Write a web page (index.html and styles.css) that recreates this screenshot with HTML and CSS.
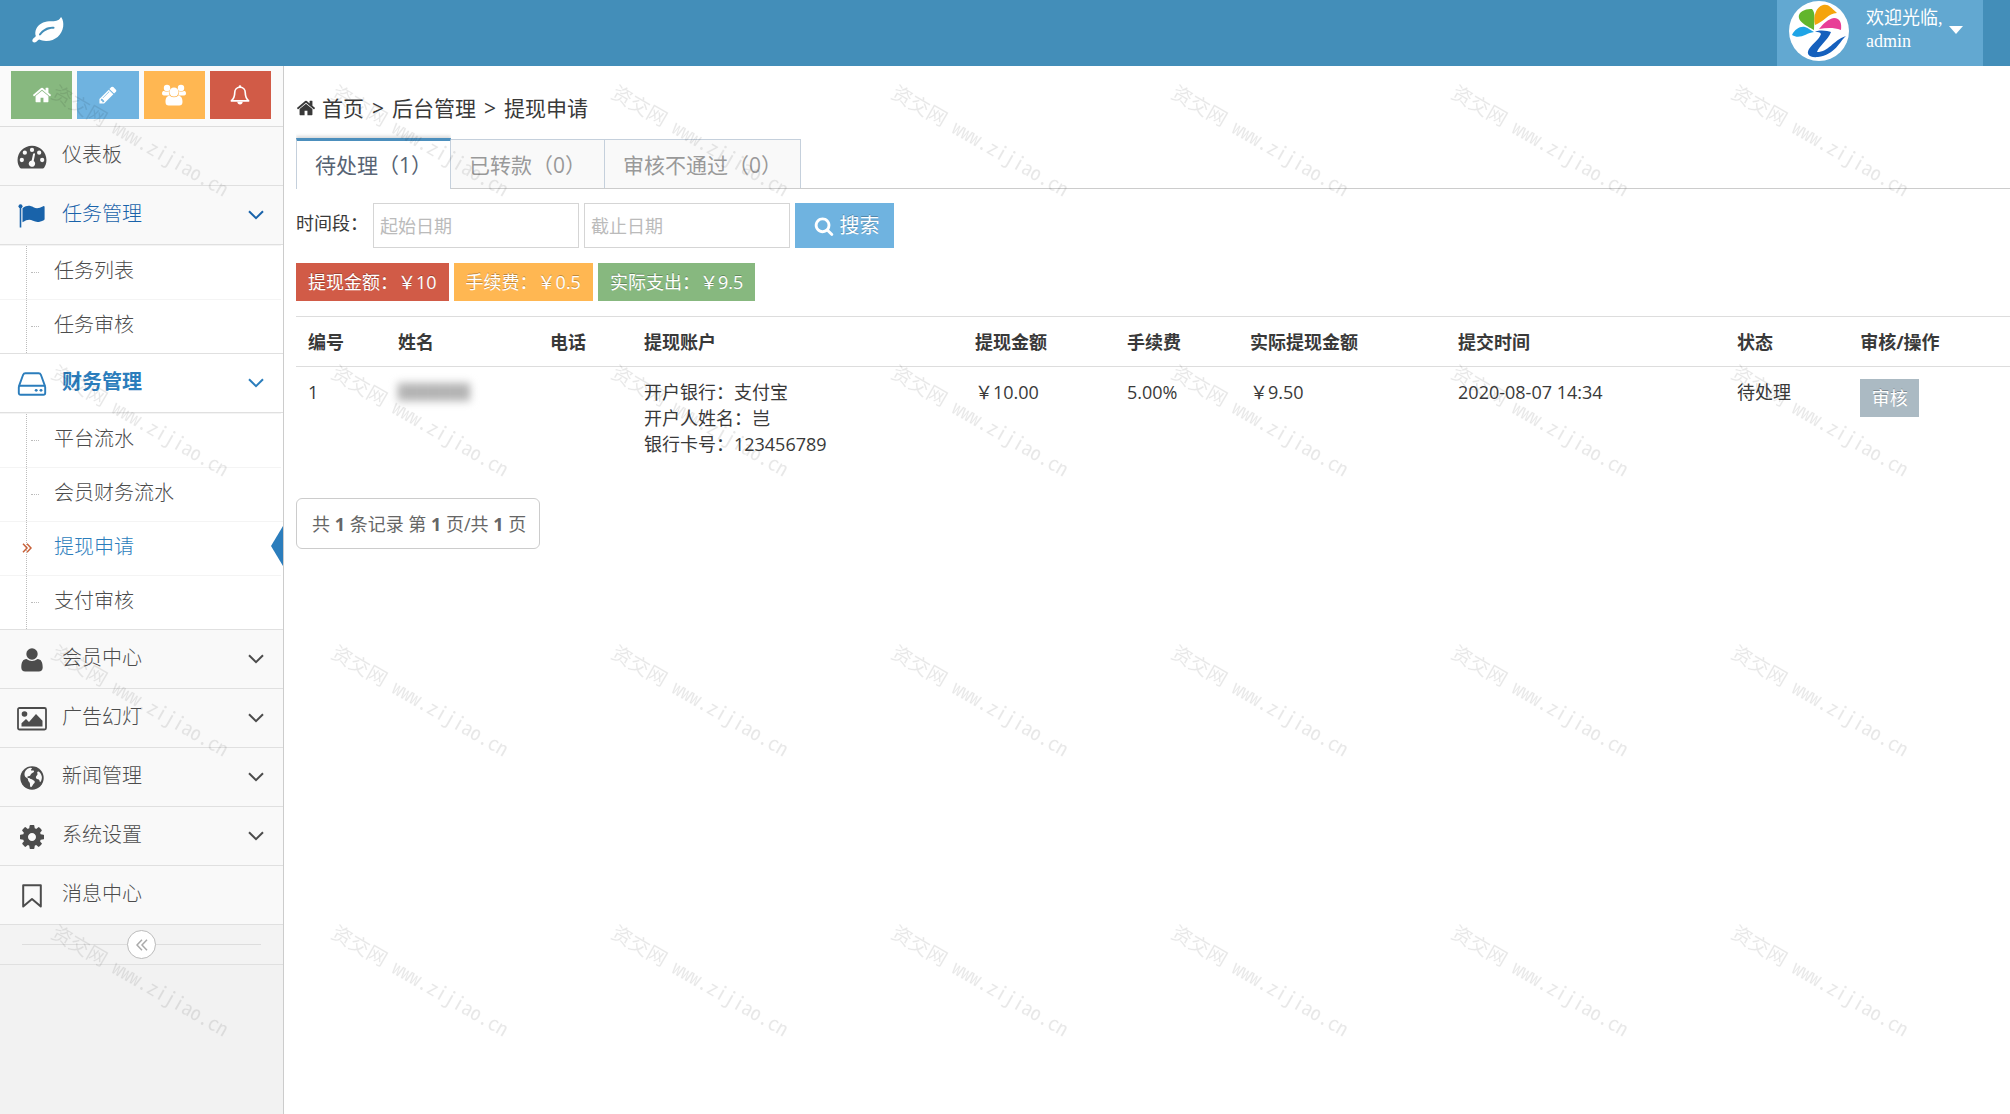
FILE: index.html
```html
<!DOCTYPE html>
<html lang="zh-CN">
<head>
<meta charset="utf-8">
<meta name="viewport" content="width=device-width, initial-scale=1">
<title>提现申请</title>
<link rel="stylesheet" href="styles.css">
</head>
<body>
<svg class="sprite" aria-hidden="true">
  <symbol id="i-home" viewBox="0 0 1792 1792"><path d="M1472 992v480q0 26-19 45t-45 19h-384v-384h-256v384h-384q-26 0-45-19t-19-45v-480q0-1 .5-3t.5-3l575-474 575 474q1 2 1 6zm223-69l-62 74q-8 9-21 11h-3q-13 0-21-7l-692-577-692 577q-12 8-24 7-13-2-21-11l-62-74q-8-10-7-23.5t11-21.5l719-599q32-26 76-26t76 26l244 204v-195q0-14 9-23t23-9h192q14 0 23 9t9 23v408l219 182q10 8 11 21.5t-7 23.5z"/></symbol>
  <symbol id="i-pencil" viewBox="0 0 1792 1792"><path d="M491 1536l91-91-235-235-91 91v107h128v128h107zm523-928q0-22-22-22-10 0-17 7l-542 542q-7 7-7 17 0 22 22 22 10 0 17-7l542-542q7-7 7-17zm-54-192l416 416-832 832h-416v-416zm683 96q0 53-37 90l-166 166-416-416 166-165q36-38 90-38 53 0 91 38l235 234q37 39 37 91z"/></symbol>
  <symbol id="i-search" viewBox="0 0 1792 1792"><path d="M1216 832q0-185-131.5-316.5t-316.5-131.5-316.5 131.5-131.5 316.5 131.5 316.5 316.5 131.5 316.5-131.5 131.5-316.5zm512 832q0 52-38 90t-90 38q-54 0-90-38l-343-342q-179 124-399 124-143 0-273.5-55.5t-225-150-150-225-55.5-273.5 55.5-273.5 150-225 225-150 273.5-55.5 273.5 55.5 225 150 150 225 55.5 273.5q0 220-124 399l343 343q37 37 37 90z"/></symbol>
  <symbol id="i-cog" viewBox="128 128 1536 1536"><path d="M1152 896q0-106-75-181t-181-75-181 75-75 181 75 181 181 75 181-75 75-181zm512-109v222q0 12-8 23t-20 13l-185 28q-19 54-39 91 35 50 107 138 10 12 10 25t-9 23q-27 37-99 108t-94 71q-12 0-26-9l-138-108q-44 23-91 38-16 136-29 186-7 28-36 28h-222q-14 0-24.5-8.5t-11.5-21.5l-28-184q-49-16-90-37l-141 107q-10 9-25 9-14 0-25-11-126-114-165-168-7-10-7-23 0-12 8-23 15-21 51-66.500t54-70.500q-27-50-41-99l-183-27q-13-2-21-12.500t-8-23.500v-222q0-12 8-23t19-13l186-28q14-46 39-92-40-57-107-138-10-12-10-24 0-10 9-23 26-36 98.500-107.500t94.500-71.500q13 0 26 10l138 107q44-23 91-38 16-136 29-186 7-28 36-28h222q14 0 24.500 8.500t11.500 21.500l28 184q49 16 90 37l142-107q9-9 24-9 13 0 25 10 129 119 165 170 7 8 7 22 0 12-8 23-15 21-51 66.500t-54 70.500q26 50 41 98l183 28q13 2 21 12.500t8 23.500z"/></symbol>
  <symbol id="i-leaf" viewBox="0 0 32 26"><path fill-rule="evenodd" d="M29.500 0.500c1.600 2.500 2.100 5.800 1.700 9C30 18 23 24.200 14 24c-2.800 0-5-.8-6.800-1.400-1.500.3-2.300 2.900-4.700 2.900C1 25.500 0 24.500.4 23c.5-1.900 3-2.400 3.400-3.900C3 17 3.100 14.400 4.200 12 6.500 7 11.500 4.800 17 4.300c4.500-.4 8.300.4 10.800-2.600C28.300 1 28.700 0 29.500.5zM21.500 9.800c-6.500-.4-10.500 2.400-14.200 6.900-1 1.300.5 2.400 1.500 1.300 3.500-3.900 7.200-6.300 12.700-6.200 1.400 0 1.400-2 0-2z"/></symbol>
  <symbol id="i-group" viewBox="0 0 24 22"><circle cx="5" cy="4" r="3.200"/><circle cx="19" cy="4" r="3.200"/><path d="M0 9.500c0-2 1-2.500 2-2.500 1 .8 4 .8 5 .3-.3 2 .2 3.200 1 4.200H3c-2 0-3-.6-3-2zM24 9.500c0-2-1-2.500-2-2.500-1 .8-4 .8-5 .3.300 2-.2 3.200-1 4.200h5c2 0 3-.6 3-2z"/><circle cx="12" cy="8" r="4.600"/><path d="M3.500 18c0-4 1.500-6.200 4.200-6.200 2.800 2 5.800 2 8.600 0 2.700 0 4.200 2.200 4.200 6.200 0 2.500-1.200 3.500-3.200 3.500H6.700c-2 0-3.200-1-3.200-3.500z"/></symbol>
  <symbol id="i-bell" viewBox="0 0 22 22"><path fill="none" stroke="currentColor" stroke-width="1.800" stroke-linejoin="round" d="M11 2.500c-4 0-5.800 3-5.800 6 0 4.500-1.200 6.500-3.700 9h19c-2.500-2.500-3.700-4.500-3.700-9 0-3-1.800-6-5.800-6z"/><circle cx="11" cy="1.800" r="1.500"/><path d="M8 18.500h6c0 1.800-1.300 3-3 3s-3-1.200-3-3z"/></symbol>
  <symbol id="i-dash" viewBox="0 0 28 22"><path fill-rule="evenodd" d="M14 .5c7.500 0 13.500 6 13.500 13.300 0 2.700-.8 5.200-2.200 7.300-.3.500-.7.700-1.300.7H4c-.6 0-1-.2-1.300-.7C1.300 19 .5 16.500.5 13.800.5 6.500 6.500.5 14 .5zM4.500 11.800a2 2 0 1 0 0 4 2 2 0 0 0 0-4zM7.300 5a2 2 0 1 0 0 4 2 2 0 0 0 0-4zM14 2.400a2 2 0 1 0 0 4 2 2 0 0 0 0-4zM20.700 5a2 2 0 1 0 0 4 2 2 0 0 0 0-4zM23.500 11.800a2 2 0 1 0 0 4 2 2 0 0 0 0-4zM15 8.300l-1.300 5.900a3 3 0 1 0 1.900.5l1.200-6c.3-1.200-1.500-1.600-1.800-.4z"/></symbol>
  <symbol id="i-flag" viewBox="0 0 28 24"><circle cx="2.500" cy="2.200" r="2"/><path d="M1.700 3h1.600v20.500H1.700z"/><path d="M4.500 4.200C9 1 12 1.500 15.500 3.300c3.200 1.600 5.700 1 9.800-1.100.7-.3 1.300 0 1.300.8v12c0 .6-.3 1-.8 1.200-4.500 2.300-7.600 2.200-10.800.6-3.500-1.700-6-1.200-10.500 1.500z"/></symbol>
  <symbol id="i-hdd" viewBox="0 0 24 20"><path fill="none" stroke="currentColor" stroke-width="1.600" stroke-linejoin="round" d="M1 12.200 4.600 2.300C5 1.300 5.600 1 6.500 1h11c.9 0 1.500.3 1.900 1.300L23 12.200M2.200 11.500h19.600c.8 0 1.200.4 1.200 1.200V17.500c0 .9-.6 1.500-1.500 1.500h-19C1.600 19 1 18.400 1 17.500v-4.800c0-.8.4-1.200 1.200-1.200z"/><circle cx="15.500" cy="15.300" r="1.200"/><circle cx="19.500" cy="15.300" r="1.200"/></symbol>
  <symbol id="i-user" viewBox="0 0 22 24"><circle cx="11" cy="6" r="5.700"/><path d="M.3 19.500c0-5 1.500-8.500 5.200-8.500 3.400 2.600 7.600 2.600 11 0 3.700 0 5.200 3.500 5.200 8.500 0 2.500-1.500 4-3.900 4H4.200c-2.400 0-3.900-1.500-3.900-4z"/></symbol>
  <symbol id="i-pic" viewBox="0 0 30 24"><rect x="1" y="1" width="28" height="21.500" rx="1.500" fill="none" stroke="currentColor" stroke-width="1.800"/><circle cx="7.500" cy="7" r="2.800"/><path d="M4.500 19.500v-3.200l4.500-4.300 3 3L19 7l6.500 6.800v5.700z"/></symbol>
  <symbol id="i-globe" viewBox="0 0 24 24"><circle cx="12" cy="12" r="11.700"/><path fill="#f9f9f9" d="M7.500 2.700c2.500-1.200 4.500-.9 4.500-.4 0 1-1.500 1-1 2 .6.900 2.300-.5 3 .7.500 1.200-1.500 1.800-2.700 2.700-1 .8-.5 2-2 2.300-1.200.3-2 .2-1.800 1.500.3 1 1.600 0 2.100.8.500.9 2 .5 3 1.500.9 1 2.300 1 2.200 2.300-.2 1.500-1.500 1.600-2 3-.5 1.300-1.500 2.200-2.200 2-1-.6-.3-2.500-.8-4-.5-1.200-1.700-1.600-1.700-3 0-1.200-.6-2-2-2.600-1.300-.7-1.700-2.500-1.600-4 .3-2 1.500-3.800 3-4.800zM18 5.500c1.300-.3 3.500 2.500 3.900 5.500 0 2-.6 4.200-1.600 5-.9.500-.4-1.700-1.500-2.400-1.200-.6-2.600-.6-2.900-2.200-.2-1.600 1.500-2 1.600-3.200.1-1-1-2.300.5-2.700z"/></symbol>
  <symbol id="i-mark" viewBox="0 0 20 24"><path fill="none" stroke="currentColor" stroke-width="2" stroke-linejoin="round" d="M1.200 1.200h17.600v21.300L10 15 1.200 22.500z"/></symbol>
  <symbol id="i-down" viewBox="0 0 16 10"><path fill="none" stroke="currentColor" stroke-width="2" d="M1 1.200 8 8.200 15 1.200"/></symbol>
  <symbol id="i-dright" viewBox="0 0 10 10"><path fill="none" stroke="currentColor" stroke-width="1.500" d="M1 .8 5 5 1 9.200M5 .8 9 5 5 9.200"/></symbol>
  <symbol id="i-dleft" viewBox="0 0 12 12"><path fill="none" stroke="currentColor" stroke-width="1.500" d="M6 .8 1 6 6 11.200M11 .8 6 6 11 11.200"/></symbol>
</svg>

<header class="navbar">
  <a class="brand" href="#" aria-label="首页"><svg class="leaf"><use href="#i-leaf"/></svg></a>
  <button class="user" type="button">
    <svg class="avatar" viewBox="0 0 60 60" aria-hidden="true">
      <circle cx="30" cy="30" r="30" fill="#fff"/>
      <path fill="#62b52c" d="M25 29C20 26 8 21 10 14c2-5 8-6 13-6 4 4 2 12 2 21z"/>
      <path fill="#f5a40c" d="M26 24C24 15 27 6 34 4c6-1 7 2 14 8-9 0-13 9-22 12z"/>
      <path fill="#e83e97" d="M30 28c4-5 9-10 15-11 6 0 8 5 7 12-8-3-15-2-22-1z"/>
      <path fill="#1fa4e6" d="M3 34c3-6 8-9 13-8 4 1 5 3 9 5-8 1-14 8-22 3z"/>
      <path fill="#1560bd" d="M26 31c5-3 13-1 16 0-3 8-12 14-14 20 12 0 15-11 29-16-6 5-11 19-28 21-9 1-12-3-9-8 4-6 10-9 12-15-1-2-3-2-6-2z"/>
    </svg>
    <span class="hello">欢迎光临,<br>admin</span>
    <span class="caret"></span>
  </button>
</header>

<div class="shell">
  <aside class="sidebar">
    <div class="shortcuts">
      <button class="sc green" type="button" aria-label="首页"><svg><use href="#i-home"/></svg></button>
      <button class="sc blue" type="button" aria-label="编辑"><svg><use href="#i-pencil"/></svg></button>
      <button class="sc orange" type="button" aria-label="会员"><svg class="big"><use href="#i-group"/></svg></button>
      <button class="sc red" type="button" aria-label="通知"><svg><use href="#i-bell"/></svg></button>
    </div>
    <nav>
      <ul class="menu">
        <li><a class="item" href="#"><svg class="ico"><use href="#i-dash"/></svg><span>仪表板</span></a></li>
        <li><a class="item hover" href="#"><svg class="ico"><use href="#i-flag"/></svg><span>任务管理</span><svg class="arrow"><use href="#i-down"/></svg></a>
          <ul class="sub">
            <li><a href="#">任务列表</a></li>
            <li><a href="#">任务审核</a></li>
          </ul>
        </li>
        <li><a class="item current" href="#"><svg class="ico"><use href="#i-hdd"/></svg><span>财务管理</span><svg class="arrow"><use href="#i-down"/></svg></a>
          <ul class="sub">
            <li><a href="#">平台流水</a></li>
            <li><a href="#">会员财务流水</a></li>
            <li class="active"><svg class="mark"><use href="#i-dright"/></svg><a href="#">提现申请</a></li>
            <li><a href="#">支付审核</a></li>
          </ul>
        </li>
        <li><a class="item" href="#"><svg class="ico"><use href="#i-user"/></svg><span>会员中心</span><svg class="arrow"><use href="#i-down"/></svg></a></li>
        <li><a class="item" href="#"><svg class="ico"><use href="#i-pic"/></svg><span>广告幻灯</span><svg class="arrow"><use href="#i-down"/></svg></a></li>
        <li><a class="item" href="#"><svg class="ico"><use href="#i-globe"/></svg><span>新闻管理</span><svg class="arrow"><use href="#i-down"/></svg></a></li>
        <li><a class="item" href="#"><svg class="ico"><use href="#i-cog"/></svg><span>系统设置</span><svg class="arrow"><use href="#i-down"/></svg></a></li>
        <li><a class="item" href="#"><svg class="ico"><use href="#i-mark"/></svg><span>消息中心</span></a></li>
      </ul>
    </nav>
    <div class="collapse"><button type="button" aria-label="收起菜单"><svg><use href="#i-dleft"/></svg></button></div>
  </aside>

  <main class="content">
    <nav class="crumbs">
      <svg><use href="#i-home"/></svg>
      <a href="#">首页</a><span>&gt;</span><a href="#">后台管理</a><span>&gt;</span><span>提现申请</span>
    </nav>

    <div class="tabs">
      <a class="tab on" href="#">待处理（1）</a>
      <a class="tab" href="#">已转款（0）</a>
      <a class="tab" href="#">审核不通过（0）</a>
    </div>

    <form class="filter">
      <label for="from">时间段：</label>
      <input id="from" type="text" placeholder="起始日期">
      <input type="text" placeholder="截止日期" aria-label="截止日期">
      <button type="button"><svg><use href="#i-search"/></svg>搜索</button>
    </form>

    <div class="totals">
      <span class="tag red">提现金额：￥10</span>
      <span class="tag orange">手续费：￥0.5</span>
      <span class="tag green">实际支出：￥9.5</span>
    </div>

    <table class="list">
      <colgroup><col class="c-id"><col class="c-name"><col class="c-tel"><col class="c-acct"><col class="c-sum"><col class="c-fee"><col class="c-real"><col class="c-time"><col class="c-fee"><col class="c-act"></colgroup>
      <thead>
        <tr><th>编号</th><th>姓名</th><th>电话</th><th>提现账户</th><th>提现金额</th><th>手续费</th><th>实际提现金额</th><th>提交时间</th><th>状态</th><th>审核/操作</th></tr>
      </thead>
      <tbody>
        <tr>
          <td>1</td>
          <td><span class="masked"></span></td>
          <td></td>
          <td>开户银行：支付宝<br>开户人姓名：岂<br>银行卡号：123456789</td>
          <td>￥10.00</td>
          <td>5.00%</td>
          <td>￥9.50</td>
          <td>2020-08-07 14:34</td>
          <td>待处理</td>
          <td><button class="audit" type="button">审核</button></td>
        </tr>
      </tbody>
    </table>

    <div class="pager">共 <b>1</b> 条记录 第 <b>1</b> 页/共 <b>1</b> 页</div>
  </main>
</div>

<svg class="watermark" aria-hidden="true">
  <defs>
    <pattern id="wm" x="40" y="70" width="280" height="280" patternUnits="userSpaceOnUse">
      <text class="wm-text" transform="translate(10 27) rotate(30)">资交网 www.zijiao.cn</text>
    </pattern>
  </defs>
  <rect width="100%" height="100%" fill="url(#wm)"/>
</svg>
</body>
</html>
```
FILE: styles.css
```css
* { box-sizing: border-box; }

body {
  margin: 0;
  min-height: 100vh;
  display: flex;
  flex-direction: column;
  position: relative;
  background: #fff;
  color: #393939;
  font: 400 18px/26px "Open Sans", "Noto Sans CJK SC", sans-serif;
}

a { color: inherit; text-decoration: none; }
ul { list-style: none; margin: 0; padding: 0; }
button { border: 0; padding: 0; font: inherit; color: #fff; cursor: pointer; }
svg { fill: currentColor; flex: none; }
.sprite { position: absolute; width: 0; height: 0; }

/* Top bar */
.navbar {
  display: flex;
  justify-content: space-between;
  height: 66px;
  padding: 0 27px 0 32px;
  background: #438eb9;
  color: #fff;
}
.brand { padding-top: 17px; }
.leaf { display: block; width: 32px; height: 26px; }
.user {
  display: flex;
  align-items: flex-start;
  width: 206px;
  padding: 1px 0 0 12px;
  background: #62a8d1;
}
.avatar { width: 60px; height: 60px; }
.hello {
  flex: 1;
  margin: 6px 0 0 17px;
  text-align: left;
  font: 400 18px/23px "Liberation Serif", "Noto Sans CJK SC", serif;
}
.caret {
  margin: 25px 20px 0 0;
  border: 7px solid transparent;
  border-top: 8px solid #fff;
  border-bottom: 0;
}

.shell { flex: 1; display: flex; }

/* Sidebar */
.sidebar {
  flex: none;
  width: 284px;
  background: #f2f2f2;
  border-right: 1px solid #ccc;
}
.shortcuts {
  display: flex;
  gap: 5px;
  height: 61px;
  padding: 5px 12px 7px 11px;
  background: #fafafa;
  border-bottom: 1px solid #ddd;
}
.sc { flex: 1; display: flex; align-items: center; justify-content: center; }
.sc svg { width: 20px; height: 20px; }
.sc .big { width: 24px; height: 22px; }
.green { background: #87b87f; }
.blue { background: #6fb3e0; }
.orange { background: #ffb752; }
.red { background: #d15b47; }

.item {
  display: flex;
  align-items: center;
  height: 59px;
  padding: 0 19px 0 17px;
  background: #f9f9f9;
  border-bottom: 1px solid #e0e0e0;
  color: #4c4c4c;
  font-weight: 300;
  font-size: 20px;
}
.item span { flex: 1; margin: 0 0 3px 15px; }
.ico { width: 30px; height: 24px; margin-top: 2px; }
.arrow { width: 16px; height: 10px; }
.item.hover { color: #1963aa; }
.item.current { background: #fff; color: #2b7dbc; font-weight: 700; }

.sub {
  background: #fff;
  border-bottom: 1px solid #e0e0e0;
}
.sub li {
  position: relative;
  display: flex;
  align-items: center;
  height: 54px;
  margin-right: 2px;
  padding: 0 0 3px 54px;
  border-top: 1px solid #f4f4f4;
  color: #4c4c4c;
  font-weight: 300;
  font-size: 20px;
}
.sub li::before {
  content: "";
  position: absolute;
  left: 26px;
  top: 0;
  bottom: 0;
  border-left: 1px dotted #bcbcbc;
}
.sub li::after {
  content: "";
  position: absolute;
  left: 31px;
  top: 26px;
  width: 8px;
  border-top: 1px dotted #bcbcbc;
}
.sub .active { margin-right: 0; color: #2b7dbc; }
.sub .active::after {
  left: auto;
  right: 0;
  top: 4px;
  width: 0;
  border: 20px solid transparent;
  border-right: 12px solid #2b7dbc;
  border-left: 0;
}
.mark { position: absolute; left: 22px; top: 21px; width: 10px; height: 10px; color: #c86139; }

.collapse {
  display: flex;
  align-items: center;
  justify-content: center;
  height: 40px;
  border-bottom: 1px solid #e0e0e0;
  background: linear-gradient(#ddd, #ddd) center / calc(100% - 44px) 1px no-repeat, #f3f3f3;
}
.collapse button {
  display: grid;
  place-items: center;
  width: 29px;
  height: 29px;
  border: 1px solid #bbb;
  border-radius: 50%;
  background: #fff;
  color: #aaa;
}
.collapse svg { width: 12px; height: 12px; }

/* Content */
.content { flex: 1; min-width: 0; padding: 23px 0 24px 12px; }
.crumbs { display: flex; align-items: center; gap: 8px; height: 38px; font-size: 21px; }
.crumbs svg { width: 20px; height: 20px; margin-right: -2px; }

.tabs { display: flex; margin-top: 11px; border-bottom: 1px solid #ccc; }
.tab {
  height: 49px;
  margin-top: 1px;
  padding: 0 18px;
  border: 1px solid #c5d0dc;
  border-width: 1px 1px 0 0;
  background: #f9f9f9;
  color: #999;
  font-size: 21px;
  line-height: 50px;
}
.tab.on {
  height: 51px;
  margin: 0 0 -1px;
  border-left-width: 1px;
  border-top: 3px solid #4c8fbd;
  background: #fff;
  color: #576373;
  line-height: 48px;
  box-shadow: 0 -2px 3px rgba(0, 0, 0, .15);
  clip-path: inset(-5px 0 0 0);
}

.filter { display: flex; gap: 5px; margin-top: 14px; }
.filter label { width: 72px; line-height: 40px; }
.filter input {
  width: 206px;
  height: 45px;
  padding: 0 6px;
  border: 1px solid #d5d5d5;
  color: #393939;
  font: inherit;
}
.filter input::placeholder { color: #bbb; opacity: 1; }
.filter button {
  display: flex;
  align-items: center;
  justify-content: center;
  gap: 6px;
  width: 99px;
  padding-left: 4px;
  background: #6fb3e0;
  font-size: 20px;
}
.filter svg { width: 20px; height: 20px; }
.filter button, .tag, .audit { text-shadow: 0 -1px 0 rgba(0, 0, 0, .25); }

.totals { display: flex; gap: 5px; margin-top: 15px; }
.tag { padding: 0 12px; color: #fff; line-height: 38px; }

.list {
  width: 100%;
  margin-top: 15px;
  border-collapse: collapse;
  table-layout: fixed;
}
.list th, .list td { padding: 12px; border-top: 1px solid #ddd; text-align: left; vertical-align: top; }
.list th { font-weight: 700; padding-bottom: 11px; }
.list tbody td { padding-bottom: 41px; }
.c-id { width: 5.25%; }
.c-name, .c-sum { width: 8.87%; }
.c-tel { width: 5.48%; }
.c-acct { width: 19.31%; }
.c-fee { width: 7.18%; }
.c-real { width: 12.14%; }
.c-time { width: 16.28%; }
.c-act { width: 9.44%; }
.masked {
  display: block;
  width: 72px;
  height: 18px;
  margin-top: 4px;
  background: repeating-linear-gradient(90deg, #aaa 0 5px, #bbb 5px 11px);
  filter: blur(4px);
}
.audit { display: block; width: 59px; height: 38px; background: #abbac3; }

.pager {
  display: inline-block;
  padding: 12px 13px 11px 15px;
  border: 1px solid #ccc;
  border-radius: 6px;
  color: #666;
}

/* Page-wide watermark laid over everything */
.watermark {
  position: absolute;
  inset: 0;
  width: 100%;
  height: 100%;
  pointer-events: none;
}
.wm-text {
  fill: rgba(0, 0, 0, .09);
  font: 400 20px "Noto Sans CJK SC", sans-serif;
  font-feature-settings: "hwid";
}
```
